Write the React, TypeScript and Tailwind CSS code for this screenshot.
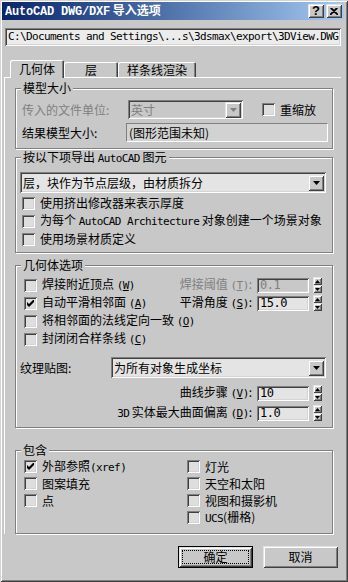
import React from 'react';

const sunken =
  'shadow-[inset_1px_1px_0_#808080,inset_-1px_-1px_0_#ffffff,inset_2px_2px_0_#404040,inset_-2px_-2px_0_#d4d4d4]';
const raised =
  'shadow-[inset_1px_1px_0_#e4e4e4,inset_-1px_-1px_0_#404040,inset_2px_2px_0_#ffffff,inset_-2px_-2px_0_#808080]';

const L: React.FC<{ children: React.ReactNode; bold?: boolean }> = ({ children, bold }) => (
  <span
    className={
      bold
        ? "font-['Liberation_Mono',monospace] text-[12px] font-bold tracking-[-0.2px]"
        : "font-['DejaVu_Sans_Mono',monospace] text-[11px] tracking-[-0.6px]"
    }
  >
    {children}
  </span>
);

const Key: React.FC<{ c: string }> = ({ c }) => (
  <L>
    (<u>{c}</u>)
  </L>
);

const DownArrow: React.FC<{ gray?: boolean }> = ({ gray }) => (
  <svg width="7" height="4" viewBox="0 0 7 4">
    <polygon points="0,0 7,0 3.5,4" fill={gray ? '#808080' : '#000'} />
  </svg>
);

const Check: React.FC<{ checked?: boolean }> = ({ checked }) => (
  <span className={`w-[13px] h-[13px] shrink-0 flex items-center justify-center bg-[#dedede] ${sunken}`}>
    {checked && (
      <svg width="7" height="7" viewBox="0 0 7 7">
        <polygon points="0,2 2,4 7,-1 7,2 2,7 0,5" fill="#000" />
      </svg>
    )}
  </span>
);

const CheckRow: React.FC<{ checked?: boolean; children: React.ReactNode; className?: string }> = ({
  checked,
  children,
  className,
}) => (
  <div className={`flex items-center ${className ?? 'h-[18px]'}`}>
    <Check checked={checked} />
    <span className="ml-[5px] whitespace-nowrap">{children}</span>
  </div>
);

const Combo: React.FC<{ value: string; className: string; disabled?: boolean }> = ({
  value,
  className,
  disabled,
}) => (
  <div
    className={`flex items-center pl-[3px] pr-[2px] ${sunken} ${
      disabled ? 'bg-[#c8c8c8] text-[#808080]' : 'bg-[#e4e4e4]'
    } ${className}`}
  >
    <span className="flex-1 whitespace-nowrap">{value}</span>
    <span className={`w-[16px] h-[16px] flex items-center justify-center bg-[#c8c8c8] ${raised}`}>
      <DownArrow gray={disabled} />
    </span>
  </div>
);

const Spin: React.FC<{ value: string; disabled?: boolean }> = ({ value, disabled }) => (
  <div className="flex items-center">
    <div
      className={`w-[52px] h-[15px] flex items-center pl-[3px] ${sunken} ${
        disabled ? 'bg-[#c8c8c8] text-[#808080]' : 'bg-[#e4e4e4]'
      }`}
    >
      <span className="font-['DejaVu_Sans_Mono',monospace] text-[12px] leading-[13px] tracking-[-0.5px]">
        {value}
      </span>
    </div>
    <div className="ml-[4px] w-[9px] h-[16px] flex flex-col">
      <span className={`h-[8px] flex items-center justify-center ${raised}`}>
        <svg width="5" height="3" viewBox="0 0 5 3">
          <polygon points="2.5,0 5,3 0,3" fill="#000" />
        </svg>
      </span>
      <span className={`h-[8px] flex items-center justify-center ${raised}`}>
        <svg width="5" height="3" viewBox="0 0 5 3">
          <polygon points="0,0 5,0 2.5,3" fill="#000" />
        </svg>
      </span>
    </div>
  </div>
);

const Group: React.FC<{ title: React.ReactNode; className: string; children: React.ReactNode }> = ({
  title,
  className,
  children,
}) => (
  <div
    className={`relative ml-[10px] w-[318px] border border-[#808080] shadow-[1px_1px_0_#ffffff,inset_1px_1px_0_#ffffff] ${className}`}
  >
    <span className="absolute -top-[8px] left-[5px] px-[2px] bg-[#c8c8c8] leading-[14px] whitespace-nowrap">
      {title}
    </span>
    {children}
  </div>
);

const Button: React.FC<{ children: React.ReactNode; primary?: boolean }> = ({ children, primary }) =>
  primary ? (
    <div className="w-[75px] h-[22px] border border-black">
      <div className={`w-full h-full p-[3px] ${raised}`}>
        <div className="w-full h-full border border-dotted border-black flex items-center justify-center">
          {children}
        </div>
      </div>
    </div>
  ) : (
    <div className={`w-[75px] h-[22px] flex items-center justify-center ${raised}`}>{children}</div>
  );

export default function App() {
  return (
    <div className="w-[348px] h-[582px] overflow-hidden bg-[#c8c8c8] pt-[2px] pl-[2px] pr-[4px] pb-[4px] shadow-[inset_1px_1px_0_#d4d4d4,inset_-1px_-1px_0_#404040,inset_2px_2px_0_#ffffff,inset_-2px_-2px_0_#808080] font-['Noto_Sans_CJK_SC','Liberation_Sans',sans-serif] text-[12px] leading-[14px] text-black flex flex-col">
      {/* title bar */}
      <div className="h-[18px] shrink-0 flex items-center bg-linear-to-r from-[#0a246a] to-[#a6caf0] pl-[3px] pr-[2px]">
        <span className="text-white font-bold whitespace-nowrap">
          <L bold>AutoCAD DWG/DXF</L> 导入选项
        </span>
        <div className="ml-auto flex gap-[2px]">
          <span className={`w-[16px] h-[14px] flex items-center justify-center bg-[#c8c8c8] font-bold font-['Liberation_Sans',sans-serif] text-[13px] leading-[12px] ${raised}`}>
            ?
          </span>
          <span className={`w-[16px] h-[14px] flex items-center justify-center bg-[#c8c8c8] ${raised}`}>
            <svg width="8" height="7" viewBox="0 0 8 7">
              <path d="M0.5 0 L7.5 7 M7.5 0 L0.5 7 M1.5 0 L8.5 7 M6.5 0 L-0.5 7" stroke="#000" strokeWidth="1.1" />
            </svg>
          </span>
        </div>
      </div>

      {/* file path */}
      <div className={`mt-[8px] ml-[3px] w-[336px] h-[18px] shrink-0 flex items-center pl-[3px] bg-[#ececec] ${sunken}`}>
        <span className="font-['DejaVu_Sans_Mono',monospace] text-[11px] tracking-[-0.62px] whitespace-nowrap">
          C:\Documents and Settings\...s\3dsmax\export\3DView.DWG
        </span>
      </div>

      {/* tabs */}
      <div className="mt-[14px] ml-[8px] h-[17px] shrink-0 flex items-end">
        <div className="relative z-10 -mb-[1px] w-[54px] h-[18px] flex items-center justify-center bg-[#c8c8c8] rounded-t-[2px] shadow-[inset_1px_1px_0_#ffffff,inset_-1px_0_0_#404040,inset_-2px_0_0_#808080]">
          几何体
        </div>
        <div className="w-[54px] h-[15px] flex items-center justify-center rounded-t-[2px] shadow-[inset_1px_1px_0_#ffffff,inset_-1px_0_0_#404040,inset_-2px_0_0_#808080]">
          层
        </div>
        <div className="w-[78px] h-[15px] flex items-center justify-center rounded-t-[2px] shadow-[inset_1px_1px_0_#ffffff,inset_-1px_0_0_#404040,inset_-2px_0_0_#808080]">
          样条线渲染
        </div>
      </div>

      {/* tab page */}
      <div className="ml-[2px] w-[337px] shrink-0 border-t border-l border-white">
        <Group title="模型大小" className="mt-[10px] h-[61px] pt-[11px] pl-[6px]">
          <div className="flex items-center h-[19px]">
            <span className="w-[106px] text-[#808080] whitespace-nowrap">传入的文件单位:</span>
            <Combo value="英寸" disabled className="w-[115px] h-[19px]" />
            <div className="ml-[19px]">
              <CheckRow>重缩放</CheckRow>
            </div>
          </div>
          <div className="mt-[4px] flex items-center h-[19px]">
            <span className="w-[104px] whitespace-nowrap">结果模型大小:</span>
            <div className="w-[202px] h-[19px] flex items-center pl-[2px] bg-[#d2d2d2] border border-t-[#808080] border-l-[#808080] border-b-white border-r-white">
              (图形范围未知)
            </div>
          </div>
        </Group>

        <Group
          title={
            <>
              按以下项导出 <L>AutoCAD</L> 图元
            </>
          }
          className="mt-[8px] h-[96px] pt-[14px] pl-[4px]"
        >
          <Combo value="层，块作为节点层级，由材质拆分" className="w-[306px] h-[21px]" />
          <div className="mt-[1px] pl-[2px]">
            <CheckRow>使用挤出修改器来表示厚度</CheckRow>
            <CheckRow>
              为每个 <L>AutoCAD Architecture</L> 对象创建一个场景对象
            </CheckRow>
            <CheckRow>使用场景材质定义</CheckRow>
          </div>
        </Group>

        <Group title="几何体选项" className="mt-[12px] h-[163px] pt-[10px] pl-[4px]">
          <div className="flex items-center h-[18px] pl-[4px] pr-[10px]">
            <CheckRow>
              焊接附近顶点 <Key c="W" />
            </CheckRow>
            <div className="ml-auto flex items-center">
              <span className="text-[#808080] whitespace-nowrap">
                焊接阈值 <Key c="T" />:
              </span>
              <div className="ml-[5px]">
                <Spin value="0.1" disabled />
              </div>
            </div>
          </div>
          <div className="flex items-center h-[18px] pl-[4px] pr-[10px]">
            <CheckRow checked>
              自动平滑相邻面 <Key c="A" />
            </CheckRow>
            <div className="ml-auto flex items-center">
              <span className="whitespace-nowrap">
                平滑角度 <Key c="S" />:
              </span>
              <div className="ml-[5px]">
                <Spin value="15.0" />
              </div>
            </div>
          </div>
          <div className="pl-[4px]">
            <CheckRow>
              将相邻面的法线定向一致 <Key c="O" />
            </CheckRow>
            <CheckRow>
              封闭闭合样条线 <Key c="C" />
            </CheckRow>
          </div>
          <div className="mt-[9px] flex items-center h-[21px]">
            <span className="w-[91px] whitespace-nowrap">纹理贴图:</span>
            <Combo value="为所有对象生成坐标" className="w-[215px] h-[21px]" />
          </div>
          <div className="mt-[5px] flex items-center justify-end h-[20px] pr-[10px]">
            <span className="whitespace-nowrap">
              曲线步骤 <Key c="V" />:
            </span>
            <div className="ml-[5px]">
              <Spin value="10" />
            </div>
          </div>
          <div className="flex items-center justify-end h-[20px] pr-[10px]">
            <span className="whitespace-nowrap">
              <L>3D</L> 实体最大曲面偏离 <Key c="D" />:
            </span>
            <div className="ml-[5px]">
              <Spin value="1.0" />
            </div>
          </div>
        </Group>

        <Group title="包含" className="mt-[22px] h-[84px] pt-[7px] pl-[8px]">
          <div className="flex">
            <div className="w-[163px]">
              <CheckRow checked className="h-[17px]">
                外部参照<L>(xref)</L>
              </CheckRow>
              <CheckRow className="h-[17px]">图案填充</CheckRow>
              <CheckRow className="h-[17px]">点</CheckRow>
            </div>
            <div>
              <CheckRow className="h-[17px]">灯光</CheckRow>
              <CheckRow className="h-[17px]">天空和太阳</CheckRow>
              <CheckRow className="h-[17px]">视图和摄影机</CheckRow>
              <CheckRow className="h-[17px]">
                <L>UCS</L>(栅格)
              </CheckRow>
            </div>
          </div>
        </Group>
      </div>

      {/* buttons */}
      <div className="mt-[12px] flex justify-end gap-[10px] pr-[6px]">
        <Button primary>确定</Button>
        <Button>取消</Button>
      </div>
    </div>
  );
}
